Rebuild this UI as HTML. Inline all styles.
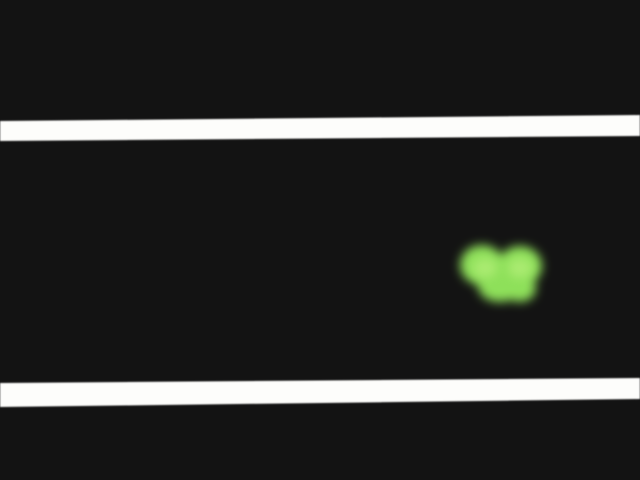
<!DOCTYPE html>
<html><head><style>html,body{margin:0;padding:0;background:#131313;width:640px;height:480px;overflow:hidden}</style></head>
<body>
<svg width="640" height="480" xmlns="http://www.w3.org/2000/svg" style="display:block">
<defs>
<filter id="b" x="-50%" y="-50%" width="200%" height="200%"><feGaussianBlur stdDeviation="5"/></filter>
<filter id="s"><feGaussianBlur stdDeviation="0.8"/></filter>
</defs>
<rect width="640" height="480" fill="#131313"/>
<polygon points="0,121 640,115 640,136 0,141" fill="#fdfdfb" filter="url(#s)"/>
<polygon points="0,383 640,378 640,399 0,407" fill="#fdfdfb" filter="url(#s)"/>
<g filter="url(#b)" fill="#8ee05a">
<ellipse cx="482" cy="265" rx="22" ry="20"/>
<ellipse cx="520" cy="266" rx="22" ry="20"/>
<ellipse cx="500" cy="286" rx="22" ry="16"/>
<ellipse cx="520" cy="288" rx="16" ry="14"/>
</g>
<g filter="url(#b)" fill="#b6f07a" opacity="0.7">
<ellipse cx="485" cy="268" rx="12" ry="10"/>
<ellipse cx="520" cy="268" rx="12" ry="10"/>
</g>
</svg>
</body></html>
